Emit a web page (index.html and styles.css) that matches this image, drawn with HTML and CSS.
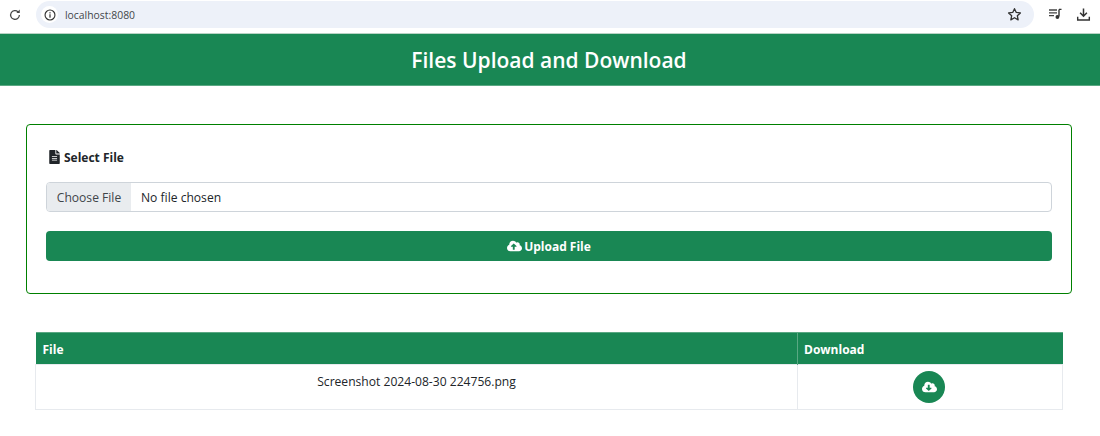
FILE: index.html
```html
<!DOCTYPE html>
<html lang="en">
<head>
<meta charset="utf-8">
<title>Files Upload and Download</title>
<link rel="stylesheet" href="styles.css">
</head>
<body>
<div class="browser-bar">
  <svg class="reload" viewBox="0 0 16 16" width="14" height="14"><path d="M13 8a5 5 0 1 1-1.500-3.600" fill="none" stroke="#444" stroke-width="1.400"/><path d="M13.400 1.800v3.800H9.600z" fill="#444"/></svg>
  <div class="url-pill">
    <span class="info-wrap"><svg viewBox="0 0 16 16" width="12" height="12"><circle cx="8" cy="8" r="6.600" fill="none" stroke="#333" stroke-width="1.500"/><rect x="7.200" y="7" width="1.600" height="4.600" fill="#333"/><rect x="7.200" y="4.300" width="1.600" height="1.600" fill="#333"/></svg></span>
    <span class="url-text">localhost:8080</span>
    <svg class="star" viewBox="0 0 16 16" width="15" height="15"><path d="M8 1.800l1.900 4 4.400.5-3.300 3 .9 4.400L8 11.500l-3.900 2.200.9-4.400-3.300-3 4.400-.5z" fill="none" stroke="#333" stroke-width="1.400" stroke-linejoin="round"/></svg>
  </div>
  <svg class="queue" viewBox="0 0 14 14" width="14" height="14"><path d="M1 3h8M1 5.800h8M1 8.600h5" stroke="#444" stroke-width="1.300"/><path d="M11 2.400h2.500M11 2.400v7" stroke="#333" stroke-width="1.400" fill="none"/><circle cx="9.400" cy="10" r="1.900" fill="#333"/></svg>
  <svg class="save" viewBox="0 0 16 16" width="15" height="15"><path d="M8 1.500v8M4.400 6.200L8 9.800l3.600-3.600" fill="none" stroke="#333" stroke-width="1.600"/><path d="M1.800 10.500v3.400h12.400v-3.400" fill="none" stroke="#333" stroke-width="1.500"/></svg>
</div>

<header class="page-header">
  <h1 class="page-title">Files Upload and Download</h1>
</header>

<section class="upload-card">
  <label class="field-label">
    <svg class="doc-icon" viewBox="0 0 384 512" width="11" height="14"><path d="M224 136V0H24C10.700 0 0 10.700 0 24v464c0 13.300 10.700 24 24 24h336c13.300 0 24-10.700 24-24V160H248c-13.200 0-24-10.800-24-24zm64 236c0 6.600-5.400 12-12 12H108c-6.600 0-12-5.400-12-12v-8c0-6.600 5.400-12 12-12h168c6.600 0 12 5.400 12 12v8zm0-64c0 6.600-5.400 12-12 12H108c-6.600 0-12-5.400-12-12v-8c0-6.600 5.400-12 12-12h168c6.600 0 12 5.400 12 12v8zm0-72v8c0 6.600-5.400 12-12 12H108c-6.600 0-12-5.400-12-12v-8c0-6.600 5.400-12 12-12h168c6.600 0 12 5.400 12 12zm96-114.100v6.100H256V0h6.100c6.400 0 12.500 2.500 17 7l97.900 98c4.500 4.500 7 10.600 7 16.900z" fill="#212529"/></svg>
    Select File
  </label>
  <div class="file-input">
    <span class="file-btn">Choose File</span>
    <span class="file-name">No file chosen</span>
  </div>
  <button class="upload-btn" type="button">
    <svg viewBox="0 0 640 512" width="15" height="12"><path d="M537.600 226.600c4.100-10.700 6.400-22.400 6.400-34.600 0-53-43-96-96-96-19.700 0-38.100 6-53.300 16.200C367 64.200 315.300 32 256 32c-88.400 0-160 71.600-160 160 0 2.700.1 5.400.2 8.100C40.200 219.800 0 273.200 0 336c0 79.500 64.500 144 144 144h368c70.700 0 128-57.300 128-128 0-61.900-44-113.600-102.400-125.400zM393.400 288H328v112c0 8.800-7.200 16-16 16h-48c-8.800 0-16-7.200-16-16V288h-65.400c-14.300 0-21.400-17.200-11.300-27.300l105.400-105.400c6.200-6.200 16.400-6.200 22.600 0l105.400 105.400c10.100 10.100 2.900 27.300-11.300 27.300z" fill="#fff"/></svg>
    Upload File
  </button>
</section>

<table class="file-table">
  <thead>
    <tr><th class="col-file">File</th><th class="col-download">Download</th></tr>
  </thead>
  <tbody>
    <tr>
      <td class="cell-name">Screenshot 2024-08-30 224756.png</td>
      <td class="cell-action">
        <a class="round-btn" href="#" aria-label="Download">
          <svg viewBox="0 0 640 512" width="15" height="12"><path d="M537.600 226.600c4.100-10.700 6.400-22.400 6.400-34.600 0-53-43-96-96-96-19.700 0-38.100 6-53.300 16.200C367 64.200 315.300 32 256 32c-88.400 0-160 71.600-160 160 0 2.700.1 5.400.2 8.100C40.200 219.800 0 273.200 0 336c0 79.500 64.500 144 144 144h368c70.700 0 128-57.300 128-128 0-61.900-44-113.600-102.400-125.400zm-132.900 88.700L299.300 420.700c-6.200 6.200-16.400 6.200-22.600 0L171.300 315.300c-10.100-10.100-2.900-27.300 11.300-27.300H248V176c0-8.800 7.200-16 16-16h48c8.800 0 16 7.200 16 16v112h65.400c14.200 0 21.400 17.200 11.300 27.300z" fill="#fff"/></svg>
        </a>
      </td>
    </tr>
  </tbody>
</table>
</body>
</html>
```
FILE: styles.css
```css
* { box-sizing: border-box; }
html, body { margin: 0; padding: 0; background: #fff; }
body {
  font-family: "Open Sans", "Noto Sans", "Liberation Sans", sans-serif;
  font-size: 13px;
  color: #212529;
  overflow: hidden;
}
.browser-bar {
  height: 34px;
  display: flex;
  align-items: flex-start;
  background: #fff;
  border-bottom: 1px solid #b9d3c5;
}
.reload { margin: 8px 14px 0 8px; flex: none; }
.url-pill {
  flex: none;
  width: 998px;
  height: 27px;
  margin-top: 1px;
  border-radius: 14px;
  background: #edf1f9;
  display: flex;
  align-items: center;
  padding-left: 5px;
  padding-right: 12px;
}
.info-wrap {
  width: 17px;
  height: 17px;
  border-radius: 50%;
  background: #fff;
  display: flex;
  align-items: center;
  justify-content: center;
}
.url-text {
  margin-left: 7px;
  font-size: 10.4px;
  color: #44474a;
  flex: 1;
}
.star { flex: none; }
.queue { margin: 7px 0 0 14px; flex: none; }
.save { margin: 7px 0 0 14px; flex: none; }
.page-header {
  height: 52px;
  background: #198754;
  display: flex;
  align-items: center;
  justify-content: center;
  padding-right: 2px;
  border-bottom: 1px solid #5aa883;
}
.page-title {
  margin: 0;
  font-size: 21px;
  font-weight: 600;
  color: #fff;
}
.upload-card {
  margin: 38px 28px 0 26px;
  height: 170px;
  border: 1px solid #008000;
  border-radius: 4px;
  padding: 23px 19px 0;
}
.field-label {
  display: flex;
  align-items: center;
  gap: 4px;
  height: 18px;
  font-size: 12px;
  font-weight: 700;
  margin-left: 3px;
}
.file-input {
  margin-top: 16px;
  height: 30px;
  display: flex;
  align-items: center;
  border: 1px solid #ced4da;
  border-radius: 4px;
  overflow: hidden;
  font-size: 12.1px;
}
.file-btn {
  height: 100%;
  width: 84px;
  padding-top: 1px;
  display: flex;
  align-items: center;
  justify-content: center;
  background: #e9ecef;
  color: #3f4549;
}
.file-name { margin-left: 10px; padding-top: 1px; }
.upload-btn {
  margin-top: 19px;
  width: 100%;
  height: 30px;
  border: 0;
  border-radius: 4px;
  background: #198754;
  color: #fff;
  font-family: inherit;
  font-size: 12px;
  font-weight: 700;
  display: flex;
  align-items: center;
  justify-content: center;
  gap: 2px;
}
.file-table {
  margin: 38px 37px 0 35px;
  width: 1028px;
  border-collapse: collapse;
  table-layout: fixed;
}
.file-table th {
  height: 32px;
  background: #198754;
  color: #fff;
  text-align: left;
  font-size: 12px;
  font-weight: 700;
  padding: 1px 6px 0;
  border-left: 1px solid #5aa883;
  border-top: 1px solid #5aa883;
}
.file-table th:first-child { border-left: 0; padding-left: 7px; }
.col-file { width: 762px; }
.file-table td {
  height: 45px;
  border: 1px solid #e7eaee;
  font-size: 12.1px;
  text-align: center;
  vertical-align: top;
}
.cell-name { padding-top: 8px; }
.cell-action { padding-top: 6px; padding-right: 3px; }
.round-btn {
  width: 32px;
  height: 32px;
  border-radius: 50%;
  background: #198754;
  display: inline-flex;
  align-items: center;
  justify-content: center;
}
```
